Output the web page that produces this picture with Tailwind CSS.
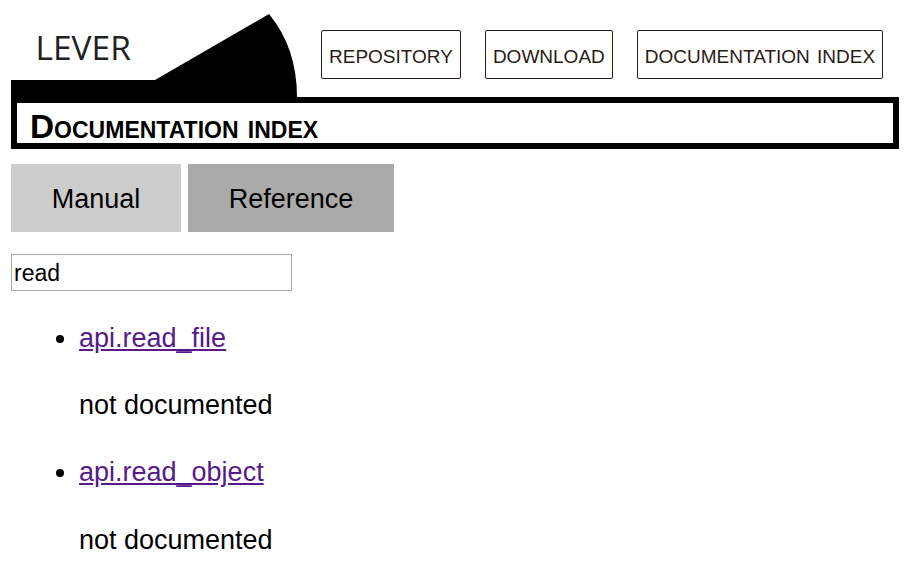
<!DOCTYPE html>
<html lang="en">
  <head>
    <meta charset="UTF-8" />
    <title>Documentation index</title>
    <script src="https://cdn.jsdelivr.net/npm/@tailwindcss/browser@4"></script>
  </head>
  <body class="font-['Liberation_Sans',Arial,sans-serif] text-black bg-white overflow-hidden h-[572px]">
    <div class="pl-[11px] pr-[10px]">
      <!-- header -->
      <div class="flex items-start h-[97px]">
        <div class="relative w-[286px] h-[97px] shrink-0">
          <svg class="absolute inset-0" width="286" height="97" viewBox="0 0 286 97">
            <path d="M0 80 L144 80 L258 14 Q286 48 286 97 L0 97 Z" fill="#000"></path>
          </svg>
          <span class="absolute left-[24.5px] top-[28px] text-[33.5px] leading-[38px] text-[#222] font-['Open_Sans',sans-serif]">LEVER</span>
        </div>
        <nav class="flex gap-6 ml-6 mt-[30px] text-[19px] text-[#2a1a1a]">
          <a href="#" class="h-[49px] px-[7px] pt-[6px] flex items-center border border-[#2a1a1a] rounded-[2px] bg-[#fffffc]">REPOSITORY</a>
          <a href="#" class="h-[49px] px-[7px] pt-[6px] flex items-center border border-[#2a1a1a] rounded-[2px] bg-[#fffffc]">DOWNLOAD</a>
          <a href="#" class="h-[49px] px-[7px] pt-[6px] flex items-center border border-[#2a1a1a] rounded-[2px] bg-[#fffffc] [word-spacing:2px]">DOCUMENTATION INDEX</a>
        </nav>
      </div>
      <!-- title -->
      <h1 class="h-[52px] border-[6px] border-black pl-[13px] text-[33.4px] leading-[47px] font-bold [font-variant:small-caps]">Documentation index</h1>
      <!-- tabs -->
      <div class="flex gap-[7px] mt-[15px] text-[27px]">
        <a href="#" class="w-[170px] h-[68px] pt-[2px] flex items-center justify-center bg-[#ccc]">Manual</a>
        <a href="#" class="w-[206px] h-[68px] pt-[2px] flex items-center justify-center bg-[#aaa]">Reference</a>
      </div>
      <input type="text" value="read" class="block mt-[22px] w-[281px] h-[37px] border border-[#aaa] px-[2px] pt-[2px] text-[23px] outline-none" />
      <!-- results -->
      <ul class="list-disc pl-[68px] mt-[29px] text-[27px] leading-[36px]">
        <li>
          <a href="#" class="text-[#551a8b] underline">api.read_file</a>
          <p class="mt-[31.2px] mb-[31.2px]">not documented</p>
        </li>
        <li>
          <a href="#" class="text-[#551a8b] underline">api.read_object</a>
          <p class="mt-[31.2px] mb-[31.2px]">not documented</p>
        </li>
      </ul>
    </div>
  </body>
</html>
